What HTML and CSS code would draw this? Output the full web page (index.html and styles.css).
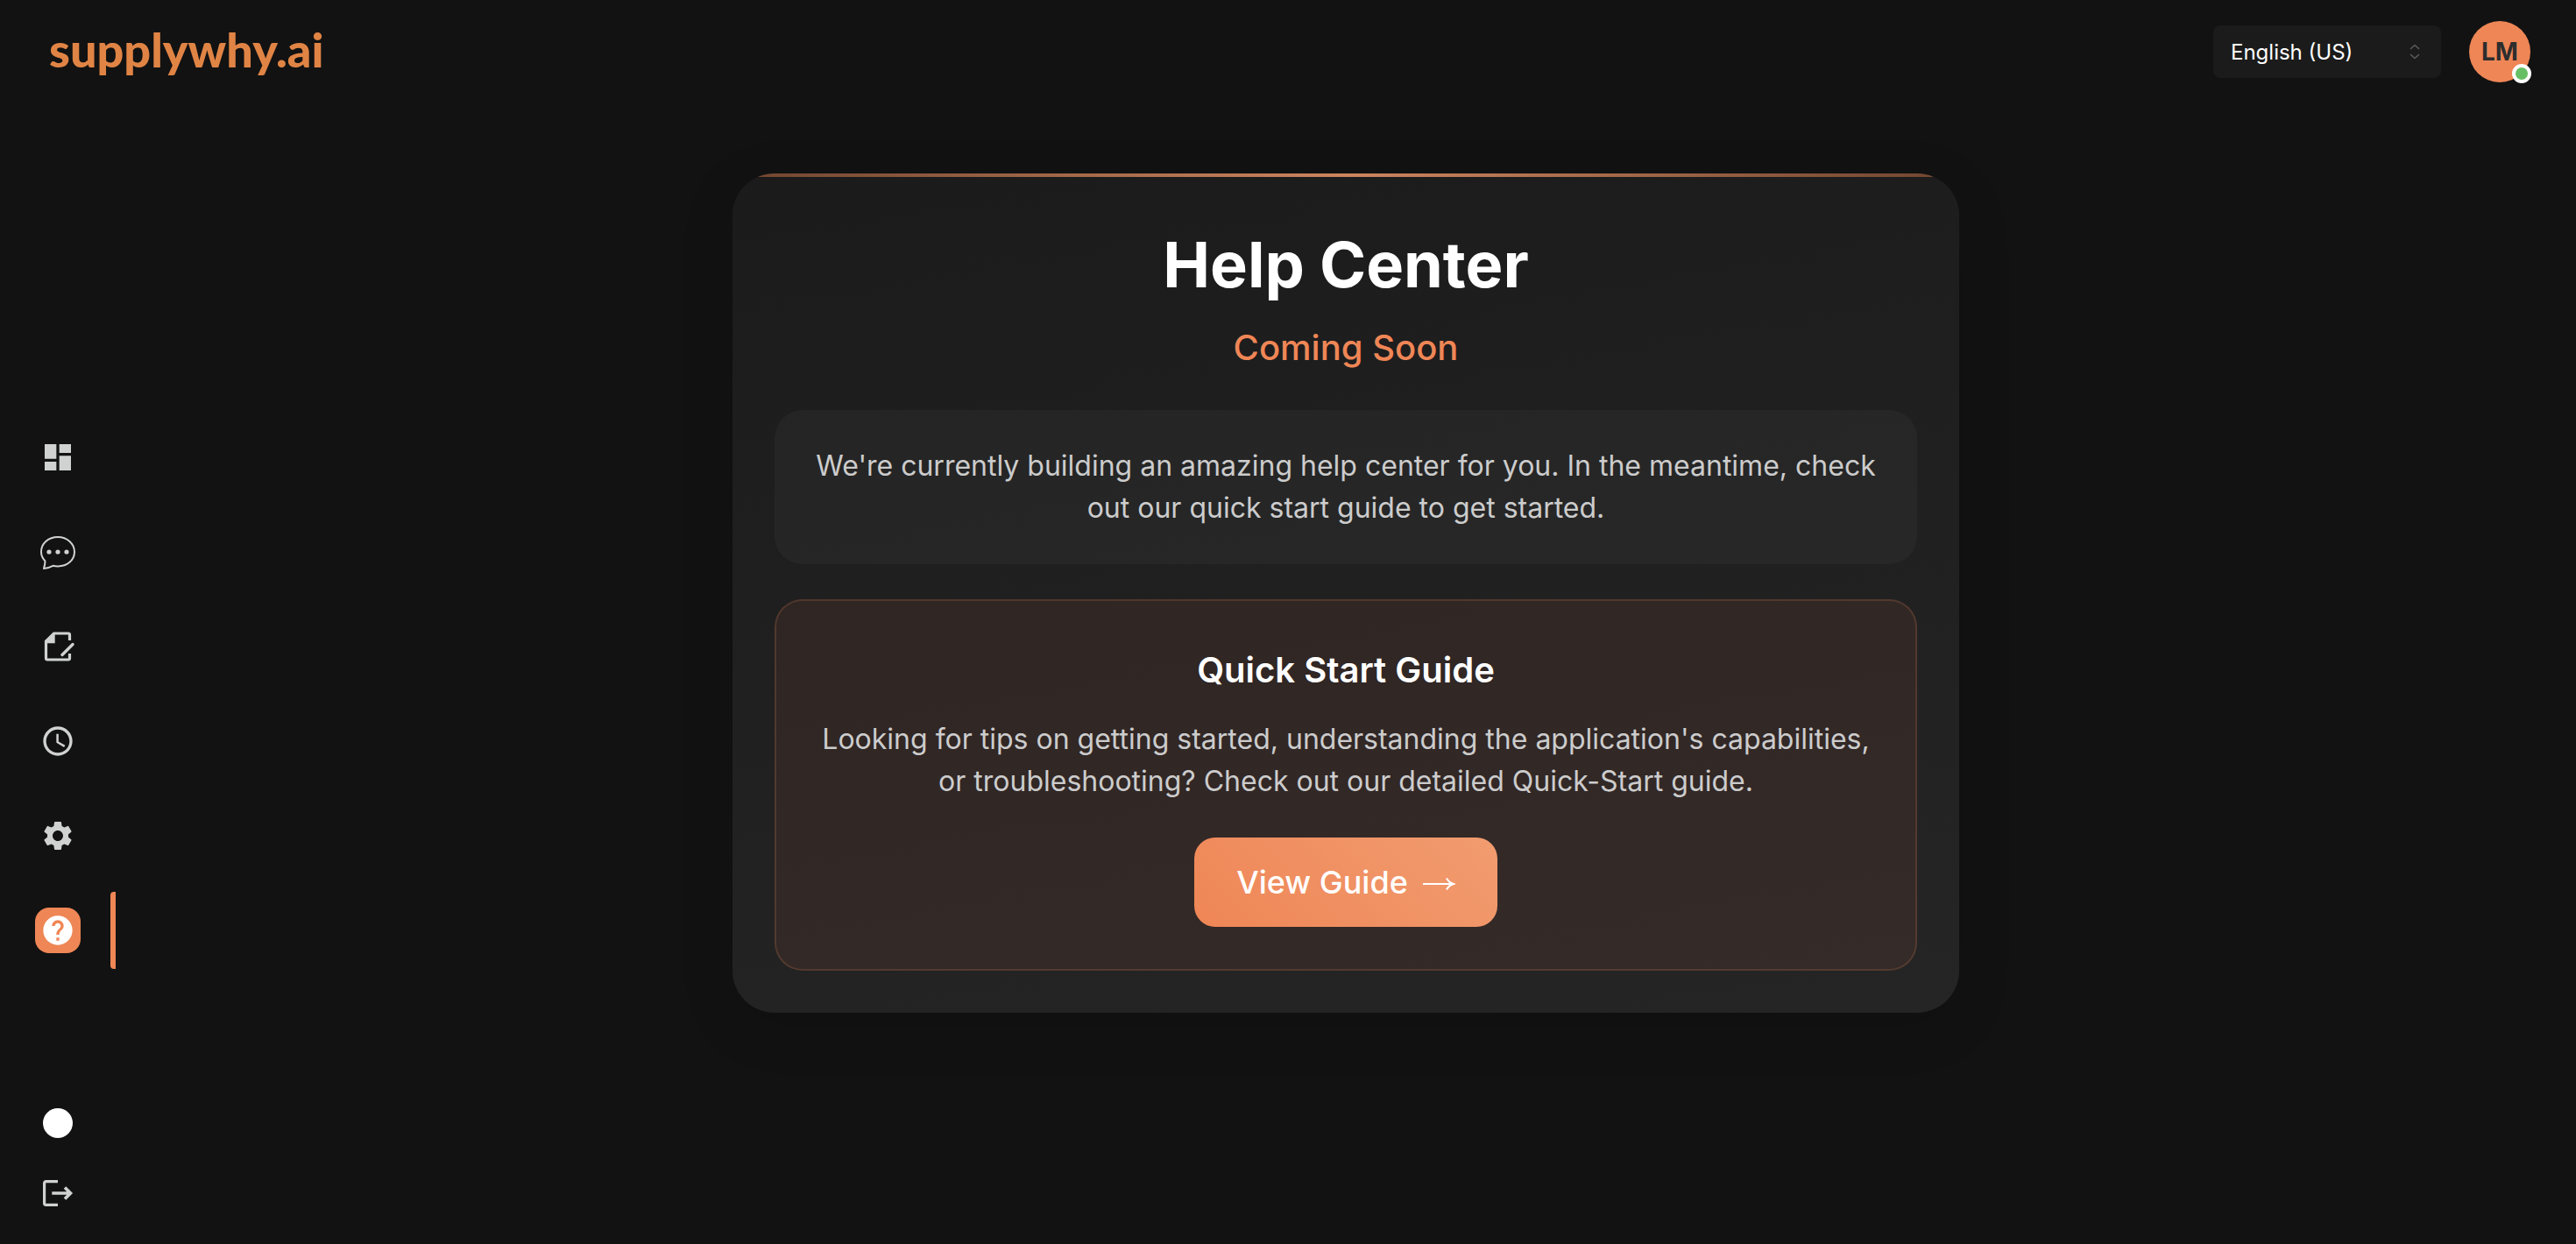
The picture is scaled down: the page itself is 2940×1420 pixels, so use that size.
FILE: index.html
```html
<!DOCTYPE html>
<html lang="en">
<head>
<meta charset="utf-8">
<meta name="viewport" content="width=device-width, initial-scale=1">
<title>Help Center</title>
<link rel="stylesheet" href="styles.css">
</head>
<body>
<header class="topbar">
  <a class="logo" href="#">supplywhy.ai</a>
  <div class="tools">
    <div class="language">
      <select class="language-select" aria-label="Language">
        <option>English (US)</option>
      </select>
      <svg class="language-icon" viewBox="0 0 12 18" fill="none" stroke="currentColor" stroke-width="1.6" stroke-linecap="round" stroke-linejoin="round" aria-hidden="true"><path d="M1.5 5.500 6 1.500l4.500 4M1.500 12.500 6 16.500l4.500-4"/></svg>
    </div>
    <button class="avatar" type="button" aria-label="Account">LM<span class="status"></span></button>
  </div>
</header>
<div class="body">
  <aside class="sidebar">
    <nav class="nav" aria-label="Main">
      <a class="nav-item" href="#" aria-label="Dashboard"><svg class="icon" viewBox="0 0 24 24" fill="currentColor"><path d="M3 13h8V3H3v10zm0 8h8v-6H3v6zm10 0h8V11h-8v10zm0-18v6h8V3h-8z"/></svg></a>
      <a class="nav-item" href="#" aria-label="Chat"><svg class="icon" viewBox="0 0 40 40"><path d="M20 3C9.500 3 1 10.200 1 20c0 4 1.600 7.300 4.300 10.200.6 2.400-.3 5.400-1.300 8.800 4-.4 7-1.400 10.500-3.200 1.800.4 3.600.6 5.500.6 10.500 0 19-6.800 19-16.400S30.500 3 20 3z" fill="none" stroke="currentColor" stroke-width="2" stroke-linejoin="round"/><g fill="currentColor"><circle cx="10" cy="20" r="2.600"/><circle cx="20" cy="20" r="2.600"/><circle cx="30" cy="20" r="2.600"/></g></svg></a>
      <a class="nav-item" href="#" aria-label="Documents"><svg class="icon" viewBox="0 0 40 40"><path d="M33.500 13V6.700a1.700 1.700 0 0 0-1.700-1.700H15.500L6.500 14v19.300A1.700 1.700 0 0 0 8.200 35h23.600a1.700 1.700 0 0 0 1.700-1.700V28" fill="none" stroke="currentColor" stroke-width="3.200"/><path d="M16.700 5v11.200H6V13z" fill="currentColor"/><path d="M25 29.500 37 17.500" stroke="currentColor" stroke-width="3.400" stroke-linecap="round"/></svg></a>
      <a class="nav-item" href="#" aria-label="History"><svg class="icon" viewBox="0 0 24 24" fill="currentColor"><path d="M11.990 2C6.470 2 2 6.480 2 12s4.470 10 9.990 10C17.520 22 22 17.520 22 12S17.520 2 11.990 2zM12 20c-4.420 0-8-3.580-8-8s3.580-8 8-8 8 3.580 8 8-3.580 8-8 8zm.5-13H11v6l5.250 3.150.75-1.230-4.500-2.670z"/></svg></a>
      <a class="nav-item" href="#" aria-label="Settings"><svg class="icon" viewBox="0 0 24 24" fill="currentColor"><path d="M19.140 12.940c.04-.3.060-.61.060-.94 0-.32-.02-.64-.07-.94l2.030-1.580c.18-.14.230-.41.120-.61l-1.920-3.320c-.12-.22-.37-.29-.59-.22l-2.390.96c-.5-.38-1.030-.7-1.620-.94l-.36-2.540c-.04-.24-.24-.41-.48-.41h-3.840c-.24 0-.43.170-.47.410l-.36 2.540c-.59.240-1.130.57-1.620.94l-2.390-.96c-.22-.08-.47 0-.59.220L2.740 8.870c-.12.210-.08.470.12.610l2.030 1.580c-.05.300-.09.630-.09.940s.02.640.07.940l-2.030 1.580c-.18.140-.23.410-.12.610l1.920 3.320c.12.220.37.290.59.220l2.390-.96c.5.380 1.030.7 1.620.94l.36 2.540c.05.240.24.410.48.410h3.840c.24 0 .44-.17.470-.41l.36-2.540c.59-.24 1.130-.56 1.620-.94l2.390.96c.22.080.47 0 .59-.22l1.920-3.320c.12-.22.070-.47-.12-.61l-2.010-1.580zM12 15.600c-1.980 0-3.600-1.620-3.600-3.600s1.620-3.600 3.600-3.600 3.600 1.620 3.600 3.600-1.620 3.600-3.600 3.600z"/></svg></a>
      <a class="nav-item active" href="#" aria-label="Help" aria-current="page"><span class="tile"><svg class="icon" viewBox="0 0 24 24" fill="currentColor"><path d="M12 2C6.480 2 2 6.480 2 12s4.480 10 10 10 10-4.480 10-10S17.520 2 12 2zm1 17h-2v-2h2v2zm2.070-7.750-.9.920C13.450 12.900 13 13.500 13 15h-2v-.5c0-1.100.45-2.100 1.170-2.830l1.240-1.260c.37-.36.590-.86.590-1.410 0-1.100-.9-2-2-2s-2 .9-2 2H8c0-2.210 1.790-4 4-4s4 1.790 4 4c0 .88-.36 1.680-.93 2.250z"/></svg></span></a>
    </nav>
    <div class="nav-footer">
      <button class="footer-item" type="button" aria-label="Toggle theme"><span class="theme-dot"></span></button>
      <button class="footer-item" type="button" aria-label="Log out"><svg class="icon" viewBox="0 0 40 40" fill="none" stroke="currentColor" stroke-width="3.200"><path d="M20 6.600H6.500a1.900 1.900 0 0 0-1.900 1.900v23a1.900 1.900 0 0 0 1.900 1.900H20"/><path d="M13.300 20H34M28 13.500l6.500 6.500-6.500 6.500" stroke-width="3.600"/></svg></button>
    </div>
  </aside>
  <main class="main">
    <section class="card">
      <h1 class="title">Help Center</h1>
      <p class="subtitle">Coming Soon</p>
      <p class="message">We're currently building an amazing help center for you. In the meantime, check out our quick start guide to get started.</p>
      <div class="guide">
        <h2 class="guide-title">Quick Start Guide</h2>
        <p class="guide-text">Looking for tips on getting started, understanding the application's capabilities, or troubleshooting? Check out our detailed Quick-Start guide.</p>
        <a class="guide-button" href="#">View Guide <svg class="arrow" viewBox="0 0 38 24" fill="none" stroke="currentColor" stroke-width="2" aria-hidden="true"><path d="M1 14h34M28 7.500c1.500 3 4.500 5.500 8 6.500-3.500 1-6.500 3.500-8 6.500"/></svg></a>
      </div>
    </section>
  </main>
</div>
</body>
</html>
```

FILE: styles.css
```css
* {
  box-sizing: border-box;
}

body {
  margin: 0;
  min-height: 100vh;
  display: flex;
  flex-direction: column;
  background: #121212;
  color: #fff;
  font-family: Inter, "Liberation Sans", sans-serif;
}

h1,
h2,
p {
  margin: 0;
}

a {
  color: inherit;
  text-decoration: none;
}

button {
  padding: 0;
  border: 0;
  background: none;
  color: inherit;
  font: inherit;
}

.topbar {
  display: flex;
  align-items: center;
  justify-content: space-between;
  height: 118px;
  padding: 0 52px 0 56px;
}

.logo {
  padding-bottom: 4px;
  color: #e08445;
  font-family: Lato, sans-serif;
  font-size: 54px;
  font-weight: 900;
  line-height: 64px;
}

.tools {
  display: flex;
  align-items: center;
  gap: 32px;
}

.language {
  position: relative;
}

.language-select {
  appearance: none;
  width: 260px;
  height: 60px;
  padding: 0 20px;
  border: 0;
  border-radius: 8px;
  background: #1b1b1b;
  color: #fff;
  font-family: inherit;
  font-size: 24px;
}

.language-icon {
  position: absolute;
  top: 21px;
  right: 24px;
  width: 12px;
  height: 18px;
  color: #5a5a5a;
  pointer-events: none;
}

.avatar {
  position: relative;
  width: 70px;
  height: 70px;
  border-radius: 50%;
  background: #ef8656;
  color: #2d2d2d;
  font-size: 28px;
  font-weight: 700;
}

.status {
  position: absolute;
  right: -1px;
  bottom: -1px;
  width: 22px;
  height: 22px;
  border: 4px solid #fff;
  border-radius: 50%;
  background: #66bf64;
}

.body {
  flex: 1;
  display: flex;
}

.sidebar {
  display: flex;
  flex-direction: column;
  width: 132px;
  padding: 224px 0 18px;
  color: #d0d2d1;
}

.nav {
  flex: 1;
  display: flex;
  flex-direction: column;
  justify-content: center;
  gap: 20px;
}

.nav-item,
.footer-item {
  display: flex;
  align-items: center;
  justify-content: center;
  width: 100%;
}

.nav-item {
  height: 88px;
}

.footer-item {
  height: 80px;
}

.icon {
  display: block;
  width: 40px;
  height: 40px;
}

.active {
  position: relative;
  color: #fff;
}

.active::after {
  content: "";
  position: absolute;
  top: 0;
  right: 0;
  width: 6px;
  height: 100%;
  border-radius: 4px 0 0 4px;
  background: #ef8656;
}

.tile {
  padding: 6px;
  border-radius: 16px;
  background: #ef8656;
}

.theme-dot {
  width: 34px;
  height: 34px;
  border-radius: 50%;
  background: #fff;
}

.main {
  flex: 1;
  padding: 80px 48px;
}

.card {
  position: relative;
  overflow: hidden;
  max-width: 1400px;
  margin: 0 auto;
  padding: 48px;
  border-radius: 48px;
  background: linear-gradient(170deg, #1b1b1b, #252525);
  box-shadow: 0 16px 64px rgba(0, 0, 0, 0.12);
  text-align: center;
}

.card::before {
  content: "";
  position: absolute;
  top: 0;
  left: 0;
  width: 100%;
  height: 4px;
  background: linear-gradient(90deg, #6f452f, #cd855f, #6f452f);
}

.title {
  margin-bottom: 8px;
  font-size: 72px;
  font-weight: 700;
  line-height: 112px;
}

.subtitle,
.guide-title {
  font-size: 40px;
  line-height: 62px;
}

.subtitle {
  margin-bottom: 40px;
  color: #ef8656;
  font-weight: 500;
}

.message {
  margin-bottom: 40px;
  padding: 40px;
  border-radius: 32px;
  background: rgba(255, 255, 255, 0.03);
}

.message,
.guide-text {
  color: #ccc;
  font-size: 32px;
  line-height: 48px;
}

.guide {
  padding: 48px;
  border: 2px solid rgba(239, 134, 86, 0.24);
  border-radius: 32px;
  background: rgba(239, 118, 88, 0.08);
  background-clip: padding-box;
}

.guide-title {
  margin-bottom: 24px;
  font-weight: 600;
}

.guide-text {
  margin-bottom: 40px;
}

.guide-button {
  display: inline-flex;
  align-items: center;
  gap: 16px;
  padding: 24px 48px;
  border-radius: 24px;
  background: linear-gradient(45deg, #ef8656, #f19c70);
  font-size: 36px;
  font-weight: 500;
  line-height: 54px;
  vertical-align: top;
}

.arrow {
  width: 38px;
  height: 24px;
}
```
